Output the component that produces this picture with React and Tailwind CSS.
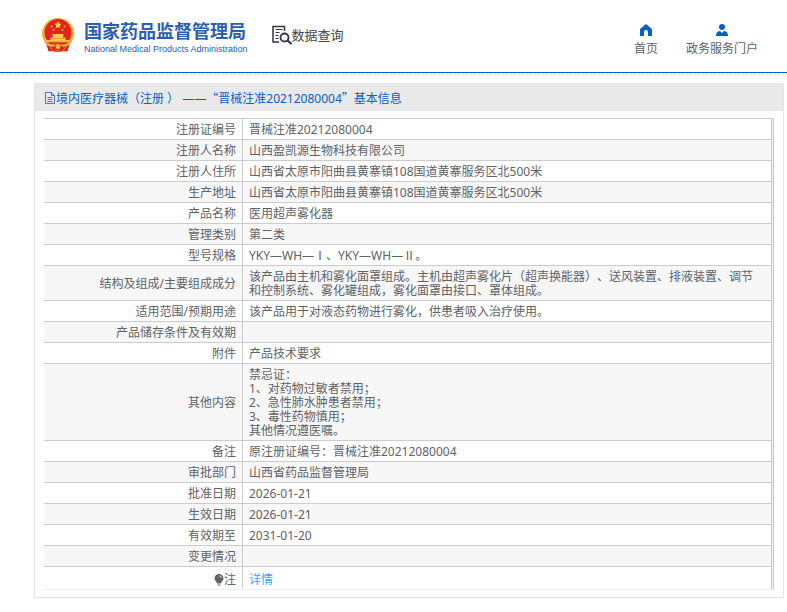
import React from "react";

const records = [
  { label: "注册证编号", value: "晋械注准20212080004" },
  { label: "注册人名称", value: "山西盈凯源生物科技有限公司" },
  {
    label: "注册人住所",
    value: "山西省太原市阳曲县黄寨镇108国道黄寨服务区北500米",
  },
  {
    label: "生产地址",
    value: "山西省太原市阳曲县黄寨镇108国道黄寨服务区北500米",
  },
  { label: "产品名称", value: "医用超声雾化器" },
  { label: "管理类别", value: "第二类" },
  { label: "型号规格", value: "YKY—WH—Ⅰ、YKY—WH—Ⅱ。" },
  {
    label: "结构及组成/主要组成成分",
    value:
      "该产品由主机和雾化面罩组成。主机由超声雾化片（超声换能器）、送风装置、排液装置、调节和控制系统、雾化罐组成，雾化面罩由接口、罩体组成。",
  },
  {
    label: "适用范围/预期用途",
    value: "该产品用于对液态药物进行雾化，供患者吸入治疗使用。",
  },
  { label: "产品储存条件及有效期", value: "" },
  { label: "附件", value: "产品技术要求" },
  {
    label: "其他内容",
    value:
      "禁忌证：\n1、对药物过敏者禁用；\n2、急性肺水肿患者禁用；\n3、毒性药物慎用；\n其他情况遵医嘱。",
  },
  { label: "备注", value: "原注册证编号：晋械注准20212080004" },
  { label: "审批部门", value: "山西省药品监督管理局" },
  { label: "批准日期", value: "2026-01-21" },
  { label: "生效日期", value: "2026-01-21" },
  { label: "有效期至", value: "2031-01-20" },
  { label: "变更情况", value: "" },
];

const Emblem = () => (
  <svg viewBox="0 0 34 36" className="h-9 w-[34px]" aria-hidden="true">
    <ellipse cx="17" cy="16.500" rx="16" ry="15.500" fill="#eeb03c" />
    <ellipse cx="17" cy="15.500" rx="13.500" ry="13.500" fill="#e0261c" />
    {/* stars */}
    <path
      d="M17 4l1.100 2.500 2.700.3-2 1.800.6 2.700-2.400-1.400-2.400 1.400.6-2.700-2-1.800 2.700-.3z"
      fill="#f8cf4a"
    />
    <g fill="#f8b83c">
      <circle cx="10.500" cy="9.500" r="1" />
      <circle cx="23.500" cy="9.500" r="1" />
      <circle cx="12.500" cy="13" r="1" />
      <circle cx="21.500" cy="13" r="1" />
    </g>
    {/* gate */}
    <path
      d="M12 17h10l1 2h-1v1.500h2.500V23H28v2.500H6V23h3.500v-2.500H12V19h-1z"
      fill="#f8cf4a"
    />
    <path d="M11 21.500h12M7 24.200h20" stroke="#ea7a2c" strokeWidth=".6" />
    {/* ribbon and gear */}
    <path
      d="M5 25.500h24l-2.500 9-5-.5-1.500 1h-6l-1.500-1-5 .5z"
      fill="#dd241c"
    />
    <path
      d="M3 23c3 3.500 6 4.500 9.500 4.500L17 26l4.500 1.500C25 27.500 28 26.500 31 23c-1 4-4 6.500-8 7l-3-1h-6l-3 1c-4-.5-7-3-8-7z"
      fill="#eeb03c"
    />
    <circle cx="17" cy="29.500" r="3" fill="#f5c044" stroke="#dd241c" />
    <path
      d="M9 30.500l3 2.500M25 30.500L22 33M14 34h6"
      stroke="#f5b53c"
      strokeWidth=".8"
    />
  </svg>
);

const SearchDocIcon = () => (
  <svg
    viewBox="0 0 20 20"
    className="h-5 w-5"
    fill="none"
    stroke="#35324a"
    aria-hidden="true"
  >
    <path d="M7 17H1V1.500h11.500V6" strokeWidth="1.500" />
    <path d="M3.500 4.500h7M3.500 7.500h4M3.500 10.500h3M3.500 13.500h3" />
    <circle cx="12.500" cy="12.500" r="4" strokeWidth="1.800" />
    <path d="M15.500 15.500l4 3.500" strokeWidth="2.200" />
  </svg>
);

const HomeIcon = () => (
  <svg viewBox="0 0 12 12" className="h-3 w-3" fill="#0a5fc4" aria-hidden="true">
    <path d="M6 0L0 5v7h4V8a2 2 0 0 1 4 0v4h4V5z" />
  </svg>
);

const UserIcon = () => (
  <svg viewBox="0 0 12 12" className="h-3 w-3" fill="#0a5fc4" aria-hidden="true">
    <circle cx="6" cy="3" r="3" />
    <path d="M0 12c0-3 1-4.500 4-5l2 2 2-2c3 .5 4 2 4 5z" />
  </svg>
);

const DocIcon = () => (
  <svg
    viewBox="0 0 12 12"
    className="h-3 w-3"
    fill="none"
    stroke="#0a5fc4"
    strokeWidth=".8"
    aria-hidden="true"
  >
    <path d="M1.500 .5h6l3 3v8h-9zM7.500 .5v3h3M3.500 5.500h5M3.500 7.500h5M3.500 9.500h5" />
  </svg>
);

const BulbIcon = () => (
  <svg viewBox="0 0 10 12" className="h-3 w-[10px]" aria-hidden="true">
    <path
      d="M5 0a4.500 4.500 0 0 1 4.500 4.500C9.500 7 7 7.500 7 9.500H3C3 7.500.5 7 .5 4.500A4.500 4.500 0 0 1 5 0z"
      fill="#606266"
    />
    <path d="M3.500 11h3" stroke="#606266" />
    <path d="M5.500 2c1.200.2 2 1 2 2" stroke="#fff" fill="none" />
  </svg>
);

const App = () => {
  return (
    <div className="bg-white font-['Noto_Sans','Noto_Sans_CJK_SC',sans-serif] text-xs text-[#606266] [text-spacing-trim:space-all]">
      {/* Header */}
      <header className="flex h-[73px] items-start justify-between border-b border-[#0a5fc4] pr-[29px] pl-[41px]">
        <div className="flex items-start pt-[17px]">
          <Emblem />
          <div className="ml-[9px] text-[#2b5db0]">
            <h1 className="text-lg leading-7 font-bold">国家药品监督管理局</h1>
            <p className="font-['Liberation_Sans',sans-serif] text-[9px] leading-2">
              National Medical Products Administration
            </p>
          </div>
          <div className="ml-6 flex items-center pt-2">
            <SearchDocIcon />
            <span className="text-[13px] leading-5 text-[#444]">数据查询</span>
          </div>
        </div>
        <nav className="flex gap-7 pt-6">
          <a href="#home" className="flex flex-col items-center gap-[5px]">
            <HomeIcon />
            <span className="leading-4">首页</span>
          </a>
          <a href="#portal" className="flex flex-col items-center gap-[5px]">
            <UserIcon />
            <span className="leading-4">政务服务门户</span>
          </a>
        </nav>
      </header>
      <div className="h-[3px] bg-[conic-gradient(#e4e4e4_25%,#fff_0_50%,#e4e4e4_0_75%,#fff_0)] bg-[size:4px_4px]" />

      {/* Detail panel */}
      <main className="mt-[7px] mr-[3px] ml-[34px] border border-t-0 border-[#e6e6ea]">
        <h2 className="flex h-7 items-center bg-[#e9e9e9] pt-0.5 pl-[9px] text-[#0a5fc4]">
          <DocIcon />
          <span className="whitespace-pre">
            境内医疗器械（注册 ） ——
            <span className="font-['Noto_Sans_CJK_SC',sans-serif]">“</span>
            晋械注准20212080004
            <span className="font-['Noto_Sans_CJK_SC',sans-serif]">”</span>
            基本信息
          </span>
        </h2>
        <div className="px-[9px] pt-[7px] pb-[7px]">
          <table className="w-full border-separate border-spacing-0 border-r border-b border-r-[#ccc] border-b-[#ebeef5] bg-[#ebeef5] pr-px leading-[14px]">
            <tbody>
              {records.map((row) => (
                <tr key={row.label} className="bg-white even:bg-[#f7f7f7]">
                  <th
                    scope="row"
                    className="w-[199px] border-t border-r border-[#ccc] px-[6px] pt-1 pb-0.5 text-right font-normal"
                  >
                    {row.label}
                  </th>
                  <td className="h-[21px] border-t border-r border-[#ccc] pt-1 pr-3 pb-0.5 pl-[6px] whitespace-pre-line">
                    {row.value}
                  </td>
                </tr>
              ))}
              <tr className="bg-white">
                <th
                  scope="row"
                  className="border-t border-r border-[#ccc] px-[6px] pt-[6px] pb-0.5 font-normal"
                >
                  <span className="flex items-center justify-end">
                    <BulbIcon />注
                  </span>
                </th>
                <td className="border-t border-r border-[#ccc] px-[6px] pt-[6px] pb-0.5">
                  <a href="#detail" className="text-[#409eff]">
                    详情
                  </a>
                </td>
              </tr>
            </tbody>
          </table>
        </div>
      </main>
    </div>
  );
};

export default App;
